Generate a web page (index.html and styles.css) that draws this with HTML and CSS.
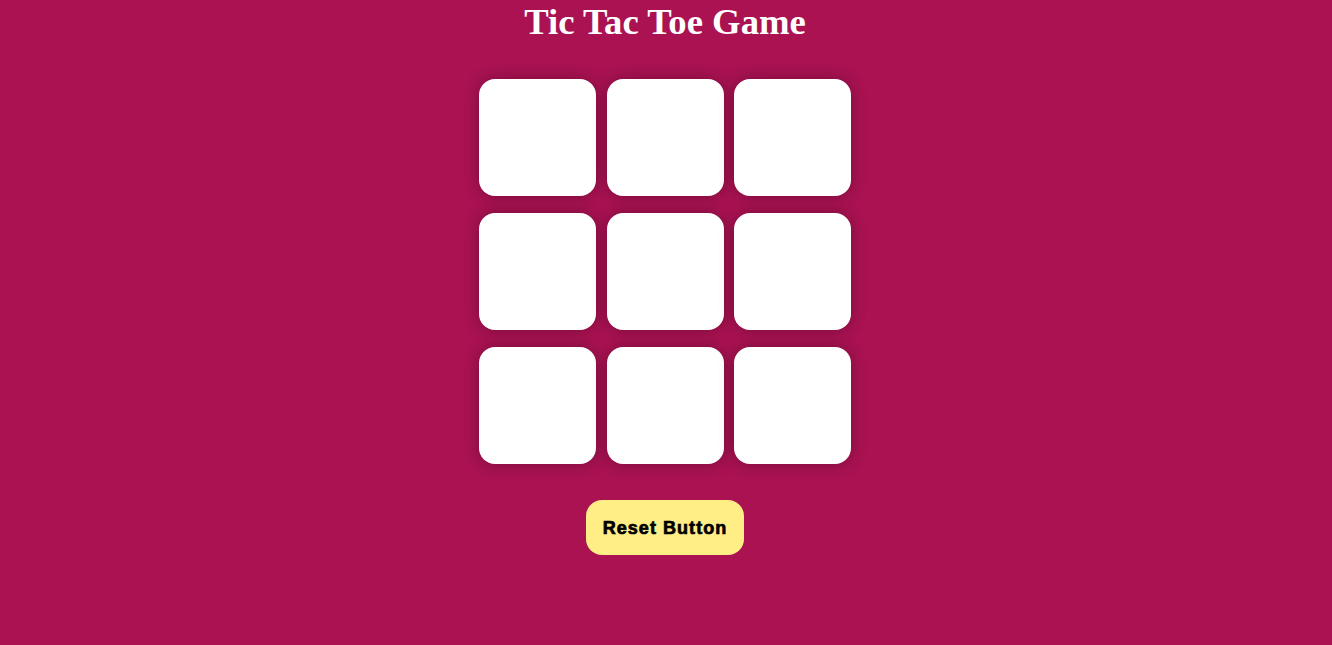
FILE: index.html
```html
<!DOCTYPE html>
<html>
<head>
<meta charset="utf-8">
<title>Tic Tac Toe Game</title>
<link rel="stylesheet" href="styles.css">
</head>
<body>
<main class="page">
  <h1 class="title">Tic Tac Toe Game</h1>
  <div class="game">
    <button class="box"></button>
    <button class="box"></button>
    <button class="box"></button>
    <button class="box"></button>
    <button class="box"></button>
    <button class="box"></button>
    <button class="box"></button>
    <button class="box"></button>
    <button class="box"></button>
  </div>
  <button class="reset">Reset Button</button>
</main>
</body>
</html>
```

FILE: styles.css
```css
html, body {
  margin: 0;
  padding: 0;
}
body {
  background-color: #aa1252;
  min-height: 645px;
}
.page {
  display: flex;
  flex-direction: column;
  align-items: center;
  padding-right: 2px;
}
.title {
  margin: 0;
  color: #ffffff;
  font-family: "Liberation Serif", "Times New Roman", serif;
  font-weight: bold;
  font-size: 36.7px;
  line-height: 44px;
}
.game {
  margin-top: 35px;
  display: grid;
  grid-template-columns: repeat(3, 117px);
  grid-auto-rows: 117px;
  column-gap: 10.5px;
  row-gap: 17px;
}
.box {
  border: none;
  border-radius: 16px;
  background-color: #ffffff;
  box-shadow: 0 0 16px rgba(0, 0, 0, 0.3);
}
.reset {
  margin-top: 36px;
  width: 158px;
  height: 55px;
  padding: 2px 0 0 0;
  border: none;
  border-radius: 16px;
  background-color: #ffed86;
  color: #000000;
  font-family: "Liberation Sans", Arial, sans-serif;
  font-weight: bold;
  font-size: 18px;
  letter-spacing: 1.05px;
  -webkit-text-stroke: 0.7px #000000;
  line-height: 53px;
}
```
